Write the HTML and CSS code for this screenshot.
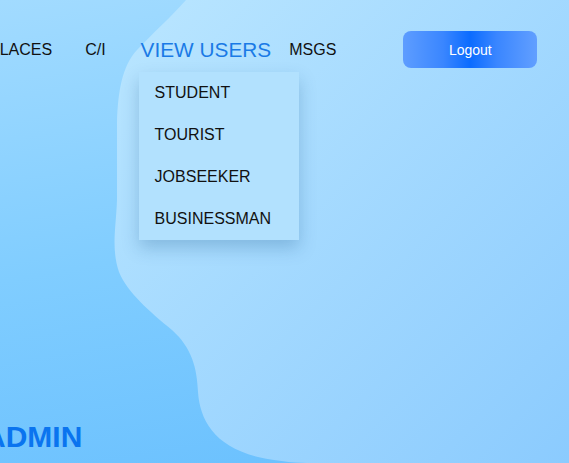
FILE: index.html
```html
<!DOCTYPE html>
<html>
<head>
<meta charset="utf-8">
<link rel="stylesheet" href="styles.css">
</head>
<body>
<div class="page">
  <svg class="wave" width="569" height="463" viewBox="0 0 569 463">
    <defs>
      <linearGradient id="wg" x1="0" y1="0" x2="1" y2="1">
        <stop offset="0" stop-color="#bae6ff"/>
        <stop offset="1" stop-color="#8bcbfe"/>
      </linearGradient>
    </defs>
    <path d="M186 0 C172 16 152 34 137 50 C122 66 118 92 117 122 L117 200 C116 228 111 248 119 272 C127 292 150 312 172 330 C192 348 197 368 198 392 C200 420 214 446 258 457 C280 462 300 463 312 463 L569 463 L569 0 Z" fill="url(#wg)"/>
  </svg>
  <header class="nav">
    <a class="link">PLACES</a>
    <a class="link">C/I</a>
    <div class="menu">
      <a class="link active">VIEW USERS</a>
      <div class="dropdown">
        <a class="item">STUDENT</a>
        <a class="item">TOURIST</a>
        <a class="item">JOBSEEKER</a>
        <a class="item">BUSINESSMAN</a>
      </div>
    </div>
    <a class="link msgs">MSGS</a>
    <button class="logout">Logout</button>
  </header>
  <main class="hero">
    <h1 class="title">ADMIN</h1>
  </main>
</div>
</body>
</html>
```

FILE: styles.css
```css
html, body {
  margin: 0;
  padding: 0;
  width: 569px;
  height: 463px;
  overflow: hidden;
}
body {
  font-family: "Liberation Sans", Arial, sans-serif;
  background: linear-gradient(170deg, #a2dbff 0%, #80cdff 50%, #68bffe 100%);
}
.page {
  position: relative;
  width: 569px;
  height: 463px;
  display: flex;
  flex-direction: column;
}
.wave {
  position: absolute;
  left: 0;
  top: 0;
  z-index: 0;
}
.nav {
  position: relative;
  z-index: 2;
  display: flex;
  align-items: center;
  height: 37px;
  margin-top: 31px;
  margin-left: -11px;
}
.link {
  font-size: 16px;
  color: #111;
  text-decoration: none;
  line-height: 18px;
}
.nav > .link:first-child {
  margin-right: 33px;
}
.menu {
  position: relative;
  margin-left: 35px;
}
.active {
  font-size: 20.8px;
  line-height: 24px;
  color: #1a7ae6;
  display: block;
}
.msgs {
  margin-left: 18px;
}
.dropdown {
  position: absolute;
  left: -2px;
  top: 34px;
  width: 160px;
  padding: 0;
  background: #b2e1fe;
  box-shadow: 0 8px 16px rgba(20, 80, 130, 0.25);
  display: flex;
  flex-direction: column;
}
.item {
  font-size: 16px;
  line-height: 18px;
  color: #111;
  padding: 12px 16px;
}
.logout {
  margin-left: 67px;
  width: 134px;
  height: 37px;
  border: none;
  border-radius: 8px;
  font-family: "Liberation Sans", Arial, sans-serif;
  font-size: 14px;
  color: #fff;
  background: linear-gradient(90deg, #5e9dff 0%, #3a86ff 30%, #0b6cff 50%, #3a86ff 70%, #629fff 100%);
}
.hero {
  position: relative;
  z-index: 1;
  flex: 1;
  display: flex;
  align-items: flex-end;
}
.title {
  margin: 0 0 9px -16px;
  font-size: 30px;
  line-height: 34px;
  font-weight: bold;
  color: #0a74ef;
}
```
